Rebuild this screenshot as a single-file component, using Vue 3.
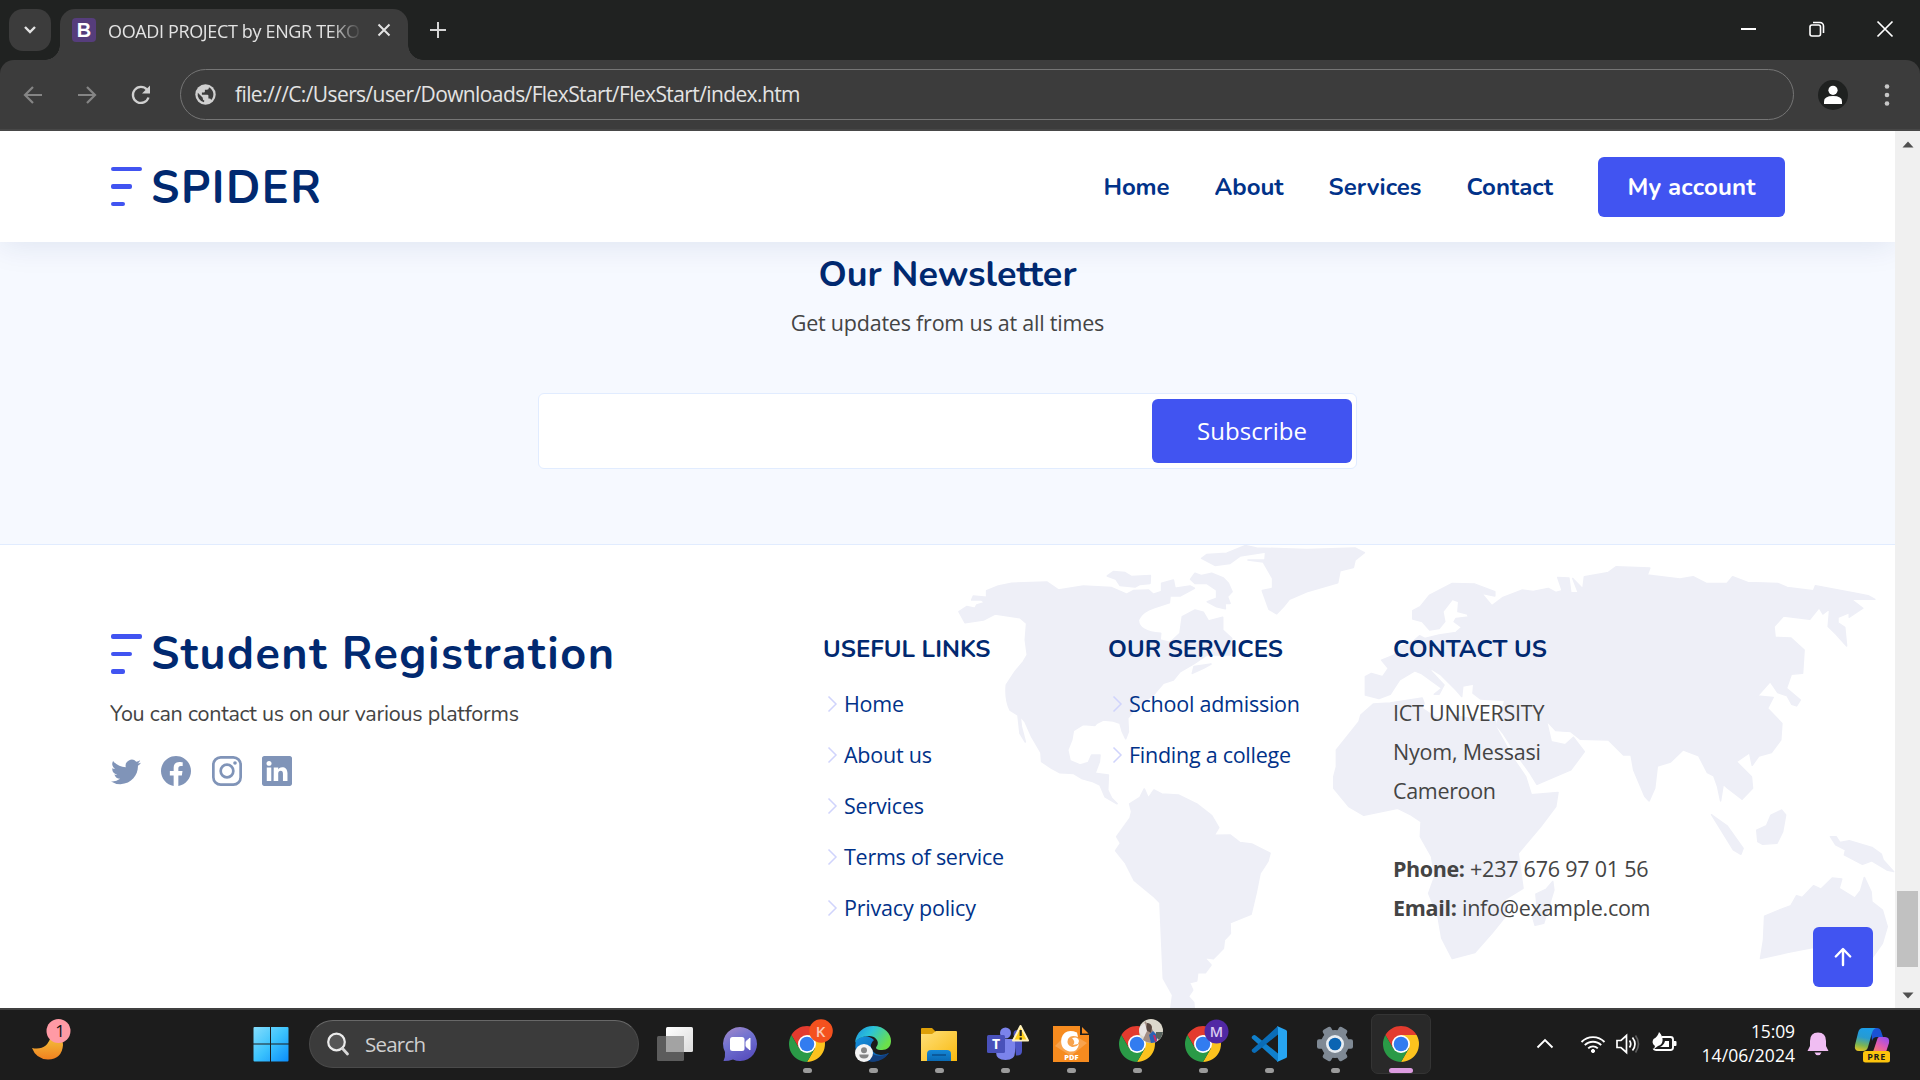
<script setup>
// Tracks a single line of text so that it fills the given width in pixels.
const vFit = {
  mounted(el, { value }) {
    const n = el.textContent.length
    if (n < 2) return
    const natural = el.getBoundingClientRect().width
    el.style.letterSpacing = ((value - natural) / (n - 1)).toFixed(3) + 'px'
    el.style.width = value + 'px'
  },
}

const nav = [
  { label: 'Home', w: 66 },
  { label: 'About', w: 69 },
  { label: 'Services', w: 93 },
  { label: 'Contact', w: 86.5 },
]
const links = [
  { label: 'Home', w: 60 },
  { label: 'About us', w: 88 },
  { label: 'Services', w: 80 },
  { label: 'Terms of service', w: 160 },
  { label: 'Privacy policy', w: 132 },
]
const services = [
  { label: 'School admission', w: 171 },
  { label: 'Finding a college', w: 162 },
]
const apps = [
  { id: 'taskview' },
  { id: 'chat' },
  { id: 'chrome', badge: 'K', run: true },
  { id: 'edge', run: true },
  { id: 'files', run: true },
  { id: 'teams', run: true },
  { id: 'pdf', run: true },
  { id: 'chrome', badge: 'photo', run: true },
  { id: 'chrome', badge: 'M', run: true },
  { id: 'code', run: true },
  { id: 'settings', run: true },
  { id: 'chrome', run: true, active: true },
]
const teeth = [0, 60, 120, 180, 240, 300]
</script>

<template>
  <div class="screen">
    <div class="tabstrip">
      <div class="tabsearch">
        <svg width="14" height="10" viewBox="0 0 14 10"><path d="M2 2l5 5 5-5" fill="none" stroke="#e3e3e3" stroke-width="2.4" /></svg>
      </div>
      <div class="tab">
        <span class="favicon">B</span>
        <span class="tabtitle"><span v-fit="252">OOADI PROJECT by ENGR TEKO</span></span>
        <svg class="tabclose" width="14" height="14" viewBox="0 0 14 14"><path d="M1.5 1.5l11 11M12.500 1.500l-11 11" stroke="#e3e3e3" stroke-width="2" /></svg>
      </div>
      <svg class="newtab" width="18" height="18" viewBox="0 0 18 18"><path d="M9 1v16M1 9h16" stroke="#d5d5d5" stroke-width="2" /></svg>
      <div class="winbtns">
        <svg width="16" height="16" viewBox="0 0 16 16"><path d="M0 8h15" stroke="#fff" stroke-width="2" /></svg>
        <svg width="16" height="16" viewBox="0 0 16 16" fill="none" stroke="#fff" stroke-width="1.6"><rect x="1" y="4" width="10.500" height="11" rx="2" /><path d="M4 1.500h7a3.500 3.500 0 0 1 3.500 3.500v7" /></svg>
        <svg width="16" height="16" viewBox="0 0 16 16"><path d="M.5 .5l15 15M15.500 .5l-15 15" stroke="#fff" stroke-width="1.700" /></svg>
      </div>
    </div>

    <div class="toolbar">
      <svg class="back" width="20" height="18" viewBox="0 0 20 18" fill="none" stroke="#858585" stroke-width="2.200"><path d="M19 9H2M10 1L2 9l8 8" /></svg>
      <svg class="fwd" width="20" height="18" viewBox="0 0 20 18" fill="none" stroke="#858585" stroke-width="2.200"><path d="M1 9h17M10 1l8 8-8 8" /></svg>
      <svg class="reload" width="22" height="20" viewBox="0 0 22 20"><path d="M18.500 12.500a8 8 0 1 1-1.500-7.800" fill="none" stroke="#d0d0d0" stroke-width="2.300" /><path d="M20 .5v8h-8z" fill="#d0d0d0" /></svg>
      <div class="omnibox">
        <svg width="21" height="21" viewBox="0 0 21 21"><circle cx="10.500" cy="10.500" r="10.200" fill="#d0d0d0" /><path d="M9 18.300A8 8 0 0 1 2.800 8.800l5 5v1q0 1.500 1.500 1.700zM16.200 16q-.5-1.400-2-1.400h-.8v-3q0-.8-1-.8H6.900V8.600h2q1 0 1-1V5.700h2q2 0 2-2v-.4a8 8 0 0 1 2.300 12.700z" fill="#3c3c3c" /></svg>
        <span class="url" v-fit="565.5">file:///C:/Users/user/Downloads/FlexStart/FlexStart/index.htm</span>
      </div>
      <svg class="profile" width="30" height="30" viewBox="0 0 30 30"><circle cx="15" cy="15" r="15" fill="#1f2120" /><circle cx="15" cy="10.300" r="4.600" fill="#fff" /><path d="M6 24v-2.500q0-5.500 9-5.500t9 5.500V24z" fill="#fff" /></svg>
      <svg class="menu" width="6" height="24" viewBox="0 0 6 24" fill="#c7c7c7"><circle cx="3" cy="3.500" r="2.300" /><circle cx="3" cy="12" r="2.300" /><circle cx="3" cy="20.500" r="2.300" /></svg>
    </div>

    <div class="viewport">
      <div class="page">
        <header class="header">
          <div class="logo">
            <span class="mark"><i></i><i></i><i></i></span>
            <span class="brand" v-fit="170">SPIDER</span>
          </div>
          <nav class="nav">
            <a v-for="n in nav" :key="n.label" v-fit="n.w">{{ n.label }}</a>
            <span class="account"><b v-fit="128">My account</b></span>
          </nav>
        </header>

        <section class="newsletter">
          <h4><span v-fit="258">Our Newsletter</span></h4>
          <p><span v-fit="313.5">Get updates from us at all times</span></p>
          <div class="form"><span class="subscribe"><span v-fit="110">Subscribe</span></span></div>
        </section>

        <footer class="footer">
          <svg class="map" width="1895" height="463" viewBox="0 0 1895 463" fill="#eeeff7">
            <g transform="translate(940 -5) scale(.33333)" stroke="#eeeff7" stroke-width="5" stroke-linejoin="round">
              <path d="M57 215L80 200L105 205L110 195L135 188L125 180L95 180L100 168L140 172L140 152L175 138L215 130L320 126L355 150L430 138L515 143L560 163L580 152L625 150L640 163L665 155L665 130L700 120L705 145L750 138L763 145L720 168L690 168L688 188C660 198 610 205 595 240C595 265 620 277 662 280L660 300L690 308L720 280L727 230L765 210L790 217L805 243L848 232L848 270L875 295L870 345L800 345L760 372L720 395L700 420L670 430L640 465L590 500L563 535L565 575L557 596L547 575L540 550L520 543L490 540L470 550L465 556L430 553L400 572L395 600L383 630L390 662L420 675L445 668L455 645L480 645L478 665L465 700L505 705L503 750L515 775L531 791L495 770L480 735L460 725L425 715L400 700L360 698L335 685L305 665L303 638L275 590L255 545L240 527L244 560L256 606L240 580L234 525L210 510Q195 480 199 435L225 395L250 365L262 345L256 300L260 250L240 233L165 222L130 240L75 248Z" />
              <path d="M502 108L520 95L555 98L575 110L631 107L630 130L600 133L585 141L540 136L528 118ZM752 118L765 100L785 107L815 100L850 114L865 130L876 155L862 170L870 190L855 190L856 206L830 200L802 185L830 175L830 150L800 130L765 130ZM785 55L800 44L860 40L915 17L950 24L1100 29L1245 24L1273 38L1245 60L1240 82L1200 92L1193 128L1100 155L1048 178L1030 200L1010 221L987 208L967 152L998 145L998 115L970 66L924 60L975 60L977 36L900 48L870 70L825 76ZM757 400L762 380L813 372L790 385Z" />
              <path d="M569 792L600 772L613 747L625 775L642 750L665 762L715 765L770 792L815 827L836 863L822 886L870 885L900 908L935 912L990 940L983 965L960 1000L948 1060L933 1123L870 1148L871 1180L853 1200L850 1225L820 1256L792 1252L813 1275L796 1298L773 1298L770 1323L748 1328L758 1350L745 1370L761 1388L763 1410L692 1410L698 1365L670 1315L660 1088L640 1068L582 1020L557 970L527 932L542 910L530 890L570 835L575 815Z" />
            </g>
            <g transform="translate(1330 -5) scale(.37628 .33333)" stroke="#eeeff7" stroke-width="4" stroke-linejoin="round">
              <path d="M94 410L110 400L140 410L155 385L137 360L170 345L185 320L220 305L238 287L252 295L290 285L335 277L350 262L330 245L335 235L368 231L365 222L340 215L342 185L325 178L300 215L305 245L290 266L265 270L245 245L220 237L220 212L240 200L265 165L325 130L385 132L438 155L438 168L403 160L430 197L460 172L510 150L540 154L580 145L600 157L617 152L605 112L635 114L640 158L660 158L645 115L672 147L676 110L740 97L760 80L850 84L843 105L930 117L965 110L1000 130L1055 130L1070 110L1110 127L1190 130L1215 142L1285 152L1290 137L1400 160L1430 167L1448 178L1385 178L1416 205L1380 232L1380 218L1350 232L1350 248L1368 262L1373 318L1345 283L1324 260L1328 206L1310 222L1300 203L1275 238L1205 228L1180 260L1183 292L1225 294L1260 330L1256 400L1226 403L1213 445L1250 480L1240 498L1227 493L1215 468L1190 458L1170 425L1136 468L1178 472L1163 505L1201 550L1198 600L1173 638L1140 648L1122 676L1115 638L1080 665L1120 710L1123 745L1095 778L1057 745L1045 733L1038 783L1030 740L1020 708L1003 698L980 648L938 630L905 666L870 678L863 745L848 783L837 770L807 690L800 645L780 645L740 600L665 598L640 575L600 572L575 542L588 605L625 614L647 592L676 635L640 690L550 733L532 700L500 650L460 580L442 556L465 482L400 477L380 460L382 432L353 438L350 470L335 450L295 405L260 380L270 395L303 435L290 463L277 463L297 445L242 400L225 393L185 420L160 463L130 476L94 465Z" />
              <path d="M115 492L160 489L245 474L250 490L245 505L280 532L310 540L322 525L380 537L440 542L440 560L490 660L520 710L535 764L606 757L600 800L560 860L500 940L513 1045L465 1078L466 1130L430 1180L385 1238L325 1256L297 1195L287 1130L262 1060L278 1010L270 950L240 890L242 845L215 825L180 805L90 826L50 800L10 745L10 710L17 680L17 630L77 545L82 525ZM592 1024L595 1050L568 1150L545 1156L537 1125L550 1095L547 1062L575 1047ZM1014 824L1055 857L1098 925L1092 943L1072 930ZM1134 870L1160 857L1172 825L1200 810L1211 825L1203 875L1188 910L1150 913L1137 905ZM1330 890L1345 890L1355 907L1380 902L1440 922L1465 942L1470 960L1498 995L1480 990L1440 963L1415 973L1367 945L1370 930L1344 915ZM1155 1128L1200 1107L1225 1097L1240 1067L1255 1072L1285 1037L1305 1047L1335 1014L1360 1017L1353 1045L1395 1074L1410 1052L1420 1012L1438 1055L1440 1085L1468 1110L1481 1160L1468 1210L1438 1258L1400 1260L1340 1230L1283 1223L1215 1238L1144 1256L1152 1200Z" />
            </g>
          </svg>

          <div class="about">
            <div class="logo">
              <span class="mark"><i></i><i></i><i></i></span>
              <span class="brand" v-fit="463">Student Registration</span>
            </div>
            <p><span v-fit="409">You can contact us on our various platforms</span></p>
            <div class="social">
              <svg viewBox="0 0 16 16"><path d="M5.026 15c6.038 0 9.341-5.003 9.341-9.334 0-.14 0-.282-.006-.422A6.685 6.685 0 0 0 16 3.542a6.658 6.658 0 0 1-1.889.518 3.301 3.301 0 0 0 1.447-1.817 6.533 6.533 0 0 1-2.087.793A3.286 3.286 0 0 0 7.875 6.03a9.325 9.325 0 0 1-6.767-3.429 3.289 3.289 0 0 0 1.018 4.382A3.323 3.323 0 0 1 .64 6.575v.045a3.288 3.288 0 0 0 2.632 3.218 3.203 3.203 0 0 1-.865.115 3.23 3.23 0 0 1-.614-.057 3.283 3.283 0 0 0 3.067 2.277A6.588 6.588 0 0 1 .78 13.58a6.32 6.32 0 0 1-.78-.045A9.344 9.344 0 0 0 5.026 15z" /></svg>
              <svg viewBox="0 0 16 16"><path d="M16 8.049c0-4.446-3.582-8.05-8-8.05C3.58 0-.002 3.603-.002 8.05c0 4.017 2.926 7.347 6.75 7.951v-5.625h-2.03V8.05H6.75V6.275c0-2.017 1.195-3.131 3.022-3.131.876 0 1.791.157 1.791.157v1.98h-1.009c-.993 0-1.303.621-1.303 1.258v1.51h2.218l-.354 2.326H9.25V16c3.824-.604 6.75-3.934 6.75-7.951z" /></svg>
              <svg viewBox="0 0 16 16"><g fill="none" stroke="#8094b8" stroke-width="1.440"><rect x=".72" y=".72" width="14.560" height="14.560" rx="3.900" /><circle cx="8" cy="8" r="3.380" /></g><circle cx="12.270" cy="3.730" r=".96" /></svg>
              <svg viewBox="0 0 16 16"><path d="M0 1.146C0 .513.526 0 1.175 0h13.65C15.474 0 16 .513 16 1.146v13.708c0 .633-.526 1.146-1.175 1.146H1.175C.526 16 0 15.487 0 14.854V1.146zm4.943 12.248V6.169H2.542v7.225h2.401zm-1.200-8.212c.837 0 1.358-.554 1.358-1.248-.015-.709-.52-1.248-1.342-1.248-.822 0-1.359.54-1.359 1.248 0 .694.521 1.248 1.327 1.248h.016zm4.908 8.212V9.359c0-.216.016-.432.08-.586.173-.431.568-.878 1.232-.878.869 0 1.216.662 1.216 1.634v3.865h2.401V9.250c0-2.220-1.184-3.252-2.764-3.252-1.274 0-1.845.7-2.165 1.193v.025h-.016l.016-.025V6.169h-2.400c.03.678 0 7.225 0 7.225h2.400z" /></svg>
            </div>
          </div>

          <div class="col">
            <h4><span v-fit="167.5">USEFUL LINKS</span></h4>
            <ul>
              <li v-for="l in links" :key="l.label">
                <svg width="21" height="18" viewBox="0 0 21 18"><path d="M5.500 1.500L13 9l-7.500 7.500" fill="none" stroke="#d0d4fc" stroke-width="1.500" /></svg>
                <a v-fit="l.w">{{ l.label }}</a>
              </li>
            </ul>
          </div>
          <div class="col">
            <h4><span v-fit="175">OUR SERVICES</span></h4>
            <ul>
              <li v-for="l in services" :key="l.label">
                <svg width="21" height="18" viewBox="0 0 21 18"><path d="M5.500 1.500L13 9l-7.500 7.500" fill="none" stroke="#d0d4fc" stroke-width="1.500" /></svg>
                <a v-fit="l.w">{{ l.label }}</a>
              </li>
            </ul>
          </div>
          <div class="col">
            <h4><span v-fit="154">CONTACT US</span></h4>
            <div class="address">
              <div><span v-fit="151.5">ICT UNIVERSITY</span></div>
              <div><span v-fit="148">Nyom, Messasi</span></div>
              <div><span v-fit="103">Cameroon</span></div>
              <div class="gap"><b v-fit="72">Phone:</b><span v-fit="178.5">+237 676 97 01 56</span></div>
              <div><b v-fit="64">Email:</b><span v-fit="188.5">info@example.com</span></div>
            </div>
          </div>

          <span class="totop"><svg width="20" height="22" viewBox="0 0 20 22"><path d="M10 19V3.500M2.800 10.500L10 3l7.200 7.500" fill="none" stroke="#fff" stroke-width="2.400" stroke-linecap="round" stroke-linejoin="round" /></svg></span>
        </footer>
      </div>
      <div class="scrollbar">
        <svg width="12" height="7" viewBox="0 0 12 7"><path d="M6 .5L11.500 6.500H.5z" fill="#505050" /></svg>
        <span class="thumb"></span>
        <svg width="12" height="7" viewBox="0 0 12 7"><path d="M6 6.500L.5 .5h11z" fill="#505050" /></svg>
      </div>
    </div>

    <div class="taskbar">
      <svg class="weather" width="40" height="40" viewBox="0 0 40 40">
        <defs><linearGradient id="moon" x1="0" y1="0" x2="0" y2="1"><stop offset="0" stop-color="#f3c33c" /><stop offset="1" stop-color="#f0801f" /></linearGradient></defs>
        <path d="M4 25q15 3 19-12q12 0 12 9q-1 14-15 14.500Q8 36 4 25z" transform="translate(-2 -1)" fill="url(#moon)" />
        <circle cx="28.500" cy="7" r="12" fill="#ff9aa5" />
        <text x="30" y="13" font-size="17" text-anchor="middle" fill="#111">1</text>
      </svg>
      <svg class="start" width="36" height="36" viewBox="0 0 36 36">
        <defs><linearGradient id="win" x1="0" y1="0" x2="1" y2="1"><stop offset="0" stop-color="#85ddfc" /><stop offset=".5" stop-color="#3cc3fd" /><stop offset="1" stop-color="#0a8dfb" /></linearGradient></defs>
        <path d="M1.500 1H17v16.500H.5V2q0-1 1-1zM18 1h16.500q1 0 1 1v15.500H18zM.5 18.500H17V35.500H1.500q-1 0-1-1zM18 18.500h17.500v16q0 1-1 1H18z" fill="url(#win)" />
      </svg>
      <div class="search">
        <svg width="24" height="24" viewBox="0 0 24 24"><circle cx="10.500" cy="10" r="8.300" fill="#565656" stroke="#ececec" stroke-width="2.200" /><path d="M16.500 16.500l5 5.500" stroke="#d8d8d8" stroke-width="2.800" stroke-linecap="round" /></svg>
        <span v-fit="61">Search</span>
      </div>

      <div class="apps">
        <div v-for="(a, i) in apps" :key="i" class="app" :class="{ active: a.active }">
          <svg width="36" height="36" viewBox="0 0 36 36">
            <template v-if="a.id === 'taskview'">
              <defs><linearGradient id="tv" x1="0" y1="0" x2="1" y2="1"><stop offset="0" stop-color="#fff" /><stop offset="1" stop-color="#dcdcdc" /></linearGradient></defs>
              <rect x="0" y="10" width="27" height="25" rx="1.500" fill="#5c5c5c" />
              <rect x="9" y="1" width="27" height="25" rx="1.500" fill="url(#tv)" />
              <path d="M9 10h18v16H9z" fill="#a3a3a3" />
            </template>
            <template v-else-if="a.id === 'chat'">
              <defs><linearGradient id="ct" x1="0" y1="0" x2=".5" y2="1"><stop offset="0" stop-color="#a78bc8" /><stop offset=".5" stop-color="#7172d0" /><stop offset="1" stop-color="#5a52c0" /></linearGradient></defs>
              <path d="M17 1a17 17 0 1 1-7 32.500q-4 1.500-9.500 1.500 2-4 1.500-9A17 17 0 0 1 17 1z" fill="url(#ct)" />
              <rect x="7" y="11" width="14.500" height="14" rx="2.500" fill="#fff" /><path d="M23 15.500l4-3.500v12l-4-3.500z" fill="#fff" stroke="#fff" stroke-linejoin="round" />
            </template>
            <template v-else-if="a.id === 'chrome'">
              <g transform="translate(-1.640 -1.640) scale(.818)">
                <path d="M4.950 13A22 22 0 0 1 43.050 13H24L14.470 29.500z" fill="#e33b2e" />
                <path d="M43.050 13A22 22 0 0 1 24 46L33.530 29.500 24 13z" fill="#fcc31e" />
                <path d="M24 46A22 22 0 0 1 4.950 13L14.470 29.500h19.060z" fill="#2a9a47" />
                <circle cx="24" cy="24" r="11" fill="#fff" /><circle cx="24" cy="24" r="8.900" fill="#327cf0" />
              </g>
              <g v-if="a.badge === 'K'"><circle cx="32" cy="5" r="11.800" fill="#f4511e" /><text x="31.500" y="10.500" font-size="15" font-weight="600" text-anchor="middle" fill="#fbc5b3">K</text></g>
              <g v-if="a.badge === 'M'"><circle cx="31.500" cy="5.500" r="12" fill="#5128a4" /><text x="31.500" y="10.500" font-size="14.500" font-weight="600" text-anchor="middle" fill="#d9ccf2">M</text></g>
              <g v-if="a.badge === 'photo'">
                <circle cx="32" cy="5" r="12" fill="#dcd8cc" />
                <path d="M26-5l6 6 5 9-1 6.500q-6 2-12-2.500l2-6-2-6z" fill="#a38d84" /><path d="M28-3q4 0 5 4l-1 6-5-3z" fill="#57463f" /><path d="M21 1l5-4 2 8-3 6-3-2q-3-4-1-8z" fill="#e9e5e4" />
                <path d="M30 9l4-4 5 5-2 6-5 1z" fill="#2c62b4" /><path d="M34 9l2 0 2 6-2 1z" fill="#c22f66" /><path d="M37 6h7q-1 5-4 8l-3-3z" fill="#56625d" />
              </g>
            </template>
            <template v-else-if="a.id === 'edge'">
              <defs>
                <linearGradient id="e1" x1="0" y1="0" x2="1" y2=".5"><stop offset="0" stop-color="#1b8fe0" /><stop offset=".45" stop-color="#2bc3d8" /><stop offset="1" stop-color="#6be04a" /></linearGradient>
                <linearGradient id="e2" x1="0" y1="0" x2="1" y2="1"><stop offset="0" stop-color="#1493e0" /><stop offset="1" stop-color="#0e4f9e" /></linearGradient>
              </defs>
              <path d="M1 15Q-2 28 9 34q14 5 25-7Q22 32 17 24q-3-6 2-10Q10 6 1 15z" fill="url(#e2)" />
              <path d="M34 27Q24 33 16 27l-2 8q12 3 20-8z" fill="#123f7e" />
              <path d="M0 17C1 6 9 0 18 0c12 0 18 8 18 15 0 6-4 9-9 9-6 0-7-2-5-4 3-5-2-10-8-10C7 10 2 13 0 17z" fill="url(#e1)" />
              <circle cx="9" cy="27" r="9" fill="#f4f4f4" /><circle cx="9" cy="24.300" r="3" fill="#858585" /><path d="M4.300 28.500h9.400q0 4-4.700 4t-4.700-4z" fill="#858585" />
            </template>
            <template v-else-if="a.id === 'files'">
              <defs>
                <linearGradient id="fd" x1="0" y1="0" x2="1" y2="1"><stop offset="0" stop-color="#ffe07a" /><stop offset="1" stop-color="#f9b90e" /></linearGradient>
                <linearGradient id="fb" x1="0" y1="0" x2="0" y2="1"><stop offset="0" stop-color="#1488d8" /><stop offset="1" stop-color="#0a6ab4" /></linearGradient>
              </defs>
              <path d="M0 3q0-1 1-1h10l4 4v6H0z" fill="#dea008" />
              <path d="M0 8h11l4-3h20q1 0 1 1v29H0z" fill="url(#fd)" />
              <path d="M6 35v-7q0-4 4-4h16q4 0 4 4v7z" fill="url(#fb)" /><path d="M11 29h14" stroke="#0a4f8c" stroke-width="1.500" />
            </template>
            <template v-else-if="a.id === 'teams'">
              <path d="M27 13h8v12q0 5-6 4.500z" fill="#4d55c4" /><circle cx="30.500" cy="8" r="4" fill="#4d55c4" />
              <circle cx="18.500" cy="7" r="5.500" fill="#7b83eb" /><path d="M9 13h19v13q0 8-9.500 8T9 26z" fill="#7b83eb" />
              <rect x="0" y="9" width="18" height="18" rx="1.500" fill="#4951ba" /><text x="9" y="23" font-size="14" font-weight="700" text-anchor="middle" fill="#fff">T</text>
              <path d="M33.500 0l7.500 14.500H26z" fill="#ffcf1c" stroke="#fff2bd" stroke-width="2" stroke-linejoin="round" /><path d="M33.700 4v6M33.700 11.500v2.200" stroke="#222" stroke-width="2.200" />
            </template>
            <template v-else-if="a.id === 'pdf'">
              <path d="M0 0h27v9h9v27H0z" fill="#f68b1f" /><path d="M29 1v6.500h6.500z" fill="#f68b1f" /><path d="M2 20L16 6l18 11-16 13z" fill="#f8a34d" />
              <path d="M24 6.500Q12 2 8.500 12q-2 11 8 13.500 8 1 9.500-7.500-3 3.500-7 3-6-2-4-8 3-5 10-2z" fill="#fff" /><path d="M19 12q6-2 7 3l-1 3-5 1q3-3-1-7z" fill="#fff" />
              <text x="18.500" y="33.500" font-size="7.500" font-weight="800" text-anchor="middle" fill="#fff">PDF</text>
            </template>
            <template v-else-if="a.id === 'code'">
              <path d="M1 12.500Q0 11 2 9.500q1.500-1 3 .3L27 27.500V36z" fill="#1080cc" />
              <path d="M1 23.500Q0 25 2 26.500q1.500 1 3-.3L27 8.500V0z" fill="#0a6db8" />
              <path d="M26 0l9 4q1 .5 1 1.500v25q0 1-1 1.500l-9 4q1-1 1-3V3q0-2-1-3z" fill="#27a5f2" />
            </template>
            <template v-else>
              <g fill="#7f8994"><circle cx="18" cy="18" r="14" /><rect v-for="t in teeth" :key="t" x="13.300" y="0" width="9.400" height="10" rx="2" :transform="`rotate(${t + 30} 18 18)`" /></g>
              <circle cx="18" cy="18" r="9" fill="#e8edf2" /><circle cx="18" cy="18" r="6.300" fill="#0b64b2" />
            </template>
          </svg>
          <i v-if="a.run" class="pill"></i>
        </div>
      </div>

      <div class="tray">
        <svg width="18" height="12" viewBox="0 0 18 12"><path d="M1.500 9.500L9 2l7.500 7.500" fill="none" stroke="#fff" stroke-width="1.900" /></svg>
        <svg class="wifi" width="26" height="20" viewBox="0 0 26 20" fill="none" stroke="#fff" stroke-width="1.900"><path d="M1.500 8a16 16 0 0 1 23 0M4.800 11.200a11.600 11.600 0 0 1 16.400 0M8.200 14.400a6.800 6.800 0 0 1 9.600 0" /><circle cx="13" cy="17" r="1.600" fill="#fff" stroke-width="1" /></svg>
        <svg class="vol" width="26" height="20" viewBox="0 0 26 20" fill="none" stroke="#fff" stroke-width="1.700"><path d="M1 6.500h4L10.500 1.500v17L5 13.500H1zM13.500 6.500q2.500 3.500 0 7M16.500 3.500q5 6.500 0 13" /><path d="M19.500 1.500q6 8.500 0 17" stroke="#5c5c5c" /></svg>
        <svg class="bat" width="25" height="20" viewBox="0 0 25 20"><path d="M10 5h8.500q2.500 0 2.500 2.500v8q0 2.500-2.500 2.500H4q-2 0-2.500-1.500" fill="none" stroke="#fff" stroke-width="1.900" /><path d="M22 9h1.500q1 0 1 1v3q0 1-1 1H22z" fill="#fff" /><path d="M7 0q4 4 3.500 9-.5 4-4.500 5L2 17l1-3Q-1 11 1.500 7 6 4.500 7 0zM13 9h4v6H8q4-2 5-6z" fill="#fff" /></svg>
        <div class="clock"><span v-fit="44">15:09</span><span v-fit="93.5">14/06/2024</span></div>
        <svg class="bell" width="22" height="24" viewBox="0 0 22 24" fill="#f0bdf2"><path d="M11 .5q8 0 8 8.500v5l2.500 5H.5l2.500-5V9Q3 .5 11 .5zM7.500 20.500h7q-1 2.800-3.500 2.800t-3.500-2.800z" /></svg>
        <svg class="copilot" width="36" height="35" viewBox="0 0 36 35">
          <defs>
            <linearGradient id="c1" x1=".2" y1="0" x2="0" y2="1"><stop offset="0" stop-color="#1d9de6" /><stop offset=".35" stop-color="#279bd0" /><stop offset=".7" stop-color="#7db553" /><stop offset="1" stop-color="#f5c61c" /></linearGradient>
            <linearGradient id="c2" x1=".8" y1="0" x2=".2" y2="1"><stop offset="0" stop-color="#9a4ff0" /><stop offset=".5" stop-color="#e25bb0" /><stop offset="1" stop-color="#f78a55" /></linearGradient>
          </defs>
          <path d="M16 0h6q3 0 4 3l2 6h-6q-4 0-5 4z" fill="#1a52d5" />
          <path d="M8 0h13q-3 1-4 5l-4 14q-1 4-5 4H4q-5 0-4-6L3 5q1-5 5-5z" fill="url(#c1)" />
          <path d="M24 9h6q5 0 4 6l-3 9q-1 2-4 2H16q2-1 3-5l3-9q.6-3 2-3z" fill="url(#c2)" />
          <rect x="8" y="23" width="27" height="11.500" rx="2.500" fill="#fcc40d" />
          <text x="21.700" y="32" font-size="9" font-weight="700" letter-spacing=".8" text-anchor="middle" fill="#1c1c1c">PRE</text>
        </svg>
      </div>
    </div>
  </div>
</template>

<style>
html, body { margin: 0; overflow: hidden; }
</style>

<style scoped>
.screen { width: 1920px; height: 1080px; display: flex; flex-direction: column; overflow: hidden; background: #202221; font-family: "Open Sans", "Noto Sans", sans-serif; box-sizing: border-box; }
.screen *, .screen *::before { box-sizing: border-box; }
.screen svg { display: block; flex: none; overflow: visible; }
span, a, b { white-space: nowrap; }
[style*="letter-spacing"] { display: block; }

.tabstrip { height: 60px; display: flex; align-items: flex-start; padding: 9px 27px 0 9px; }
.tabsearch { width: 42px; height: 42px; border-radius: 14px; background: #3c3c3c; display: flex; align-items: center; justify-content: center; }
.tab { position: relative; margin-left: 9px; width: 348px; height: 51px; border-radius: 15px 15px 0 0; background: #3c3c3c; display: flex; align-items: center; padding: 0 17px 9px 12px; }
.tab::before, .tab::after { content: ""; position: absolute; bottom: 0; width: 15px; height: 15px; }
.tab::before { left: -15px; background: radial-gradient(circle at 0 0, transparent 14.500px, #3c3c3c 15px); }
.tab::after { right: -15px; background: radial-gradient(circle at 100% 0, transparent 14.500px, #3c3c3c 15px); }
.favicon { width: 24px; height: 24px; border-radius: 4px; background: #563d7c; color: #fff; font: 700 20px/24px "Liberation Sans", sans-serif; text-align: center; }
.tabtitle { margin-left: 12px; width: 252px; overflow: hidden; font-size: 18px; line-height: 26px; color: #e3e3e3; padding-top: 2px; -webkit-mask-image: linear-gradient(90deg, #000 222px, transparent 254px); mask-image: linear-gradient(90deg, #000 222px, transparent 254px); }
.tabclose { margin-left: auto; }
.newtab { margin: 12px 0 0 21px; }
.winbtns { margin: 12px 0 0 auto; display: flex; gap: 52px; }

.toolbar { height: 71px; flex: none; display: flex; align-items: center; background: #3c3c3c; border-bottom: 2px solid #474747; border-radius: 14px 14px 0 0; padding: 0 30px 0 23px; }
.fwd { margin-left: 34px; }
.reload { margin-left: 33px; }
.omnibox { margin-left: 28px; width: 1614px; height: 51px; border: 1.500px solid #757575; border-radius: 26px; display: flex; align-items: center; padding-left: 14px; }
.url { margin-left: 19px; padding-bottom: 2px; font-size: 21px; line-height: 30px; color: #e3e3e3; }
.profile { margin-left: 24px; }
.menu { margin-left: auto; }

.viewport { height: 877px; flex: none; display: flex; background: #fff; }
.page { width: 1895px; display: flex; flex-direction: column; overflow: hidden; }
.scrollbar { width: 25px; background: #f0f0f0; display: flex; flex-direction: column; align-items: center; padding: 10px 0 9px; }
.thumb { width: 21px; height: 77px; background: #c1c1c1; margin: 743px 0 25px; }

.header { position: relative; z-index: 1; height: 111px; flex: none; display: flex; align-items: center; justify-content: space-between; background: #fff; box-shadow: 0 3px 30px rgba(1, 41, 112, .1); padding: 0 110px 0 111px; }
.logo { display: flex; align-items: center; height: 54px; }
.mark { width: 31px; margin-right: 9px; display: flex; flex-direction: column; gap: 13px; }
.mark i { height: 4.500px; border-radius: 2px; background: #4154f1; }
.mark i:nth-child(2) { width: 21px; }
.mark i:nth-child(3) { width: 14px; }
.brand { font: 700 45px/54px Nunito, Lato, sans-serif; color: #012970; padding-top: 5px; }
.nav { display: flex; align-items: center; font: 680 24px/30px Nunito, Lato, sans-serif; color: #013289; }
.nav a { margin-right: 45px; padding-top: 1px; }
.account { width: 187px; height: 60px; border-radius: 6px; background: #4154f1; color: #fff; display: flex; align-items: center; justify-content: center; }
.account b { font-weight: 700; }

.newsletter { height: 303px; flex: none; background: #f6f9ff; border-bottom: 1px solid #e1ecff; display: flex; flex-direction: column; align-items: center; padding-top: 11px; }
h4, p, ul { margin: 0; padding: 0; }
.newsletter h4 { font: 700 36px/44px Nunito, Lato, sans-serif; color: #012970; }
.newsletter p { margin-top: 9px; font-size: 21.500px; line-height: 34px; color: #444; }
.form { margin-top: 53px; width: 819px; height: 76px; background: #fff; border: 1px solid #e1ecff; border-radius: 6px; display: flex; justify-content: flex-end; padding: 5px 4px; }
.subscribe { width: 200px; height: 64px; border-radius: 6px; background: #4154f1; color: #fff; font-size: 24px; line-height: 34px; display: flex; align-items: center; justify-content: center; }

.footer { position: relative; height: 463px; flex: none; display: grid; grid-template-columns: 713px 285px 285px 1fr; padding-left: 110px; background: #fff; }
.map { position: absolute; left: 0; top: 0; }
.about, .col { position: relative; }
.about { padding-top: 82px; }
.about .logo { padding-left: 1px; }
.about .brand { padding-top: 2px; }
.about p { margin-top: 16px; font: 400 21.500px/34px Nunito, Lato, sans-serif; color: #444; }
.social { margin-top: 25px; padding-left: .5px; display: flex; gap: 20.500px; }
.social svg { width: 30px; height: 30px; fill: #8094b8; }
.col { padding-top: 89px; }
.col h4 { font: 700 24px/30px Nunito, Lato, sans-serif; color: #012970; }
.col ul { list-style: none; margin-top: 14px; }
.col li { height: 51px; display: flex; align-items: center; font-size: 21.500px; line-height: 30px; color: #013289; }
.address { margin-top: 29px; font-size: 21.500px; line-height: 39px; color: #444; }
.address div { display: flex; height: 39px; gap: 5px; }
.address .gap { margin-top: 39px; }
.totop { position: absolute; right: 22px; bottom: 21px; width: 60px; height: 60px; border-radius: 6px; background: #4154f1; display: flex; align-items: center; justify-content: center; }

.taskbar { flex: 1; border-top: 2px solid #404040; background: #1c1c1c; display: flex; align-items: center; padding: 0 29px 2px 30px; color: #fff; }
.weather { margin-top: -1px; }
.start { margin-left: 183px; }
.search { margin-left: 20px; width: 330px; height: 48px; border-radius: 24px; background: #3b3b3b; border: 1px solid #4a4a4a; border-top-color: #686868; display: flex; align-items: center; padding-left: 16px; font-size: 20.500px; line-height: 30px; color: #cfcfcf; }
.search span { margin-left: 15px; }
.apps { margin-left: 18px; display: flex; gap: 30px; }
.app { position: relative; width: 36px; height: 36px; }
.app.active::before { content: ""; position: absolute; left: -12px; top: -12px; width: 60px; height: 60px; border-radius: 7px; background: #292929; border: 1px solid #343434; }
.app svg { position: relative; }
.pill { position: absolute; left: 13.500px; top: 42px; width: 9px; height: 5px; border-radius: 3px; background: #9b9b9b; }
.active .pill { left: 6px; width: 24px; background: #dc9ce0; }
.tray { margin-left: auto; display: flex; align-items: center; }
.wifi { margin-left: 26px; }
.vol { margin-left: 10px; }
.bat { margin-left: 10px; margin-top: -4px; }
.clock { margin-left: 25px; width: 93px; padding-bottom: 2px; display: flex; flex-direction: column; align-items: flex-end; font-size: 17.500px; line-height: 24px; }
.bell { margin-left: 12px; }
.copilot { margin-left: 26px; margin-top: 2px; }
</style>
